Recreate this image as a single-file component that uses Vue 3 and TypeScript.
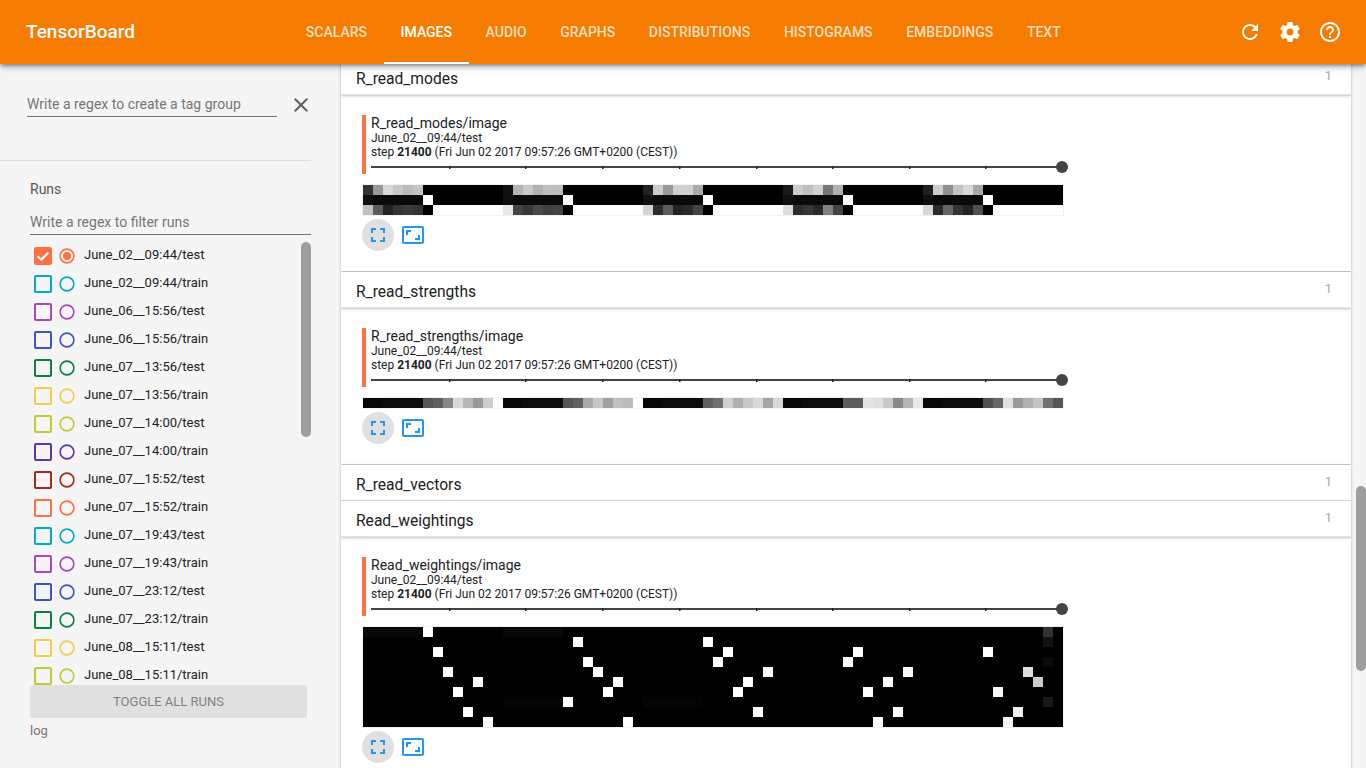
<script setup lang="ts">
interface Cell { c: number; r: number; v: string }
interface Section {
  name: string
  tag?: string
  rows?: number
  cells?: Cell[]
}

const tabs = ['Scalars', 'Images', 'Audio', 'Graphs', 'Distributions', 'Histograms', 'Embeddings', 'Text']

const palette = ['#ff7043', '#00acc1', '#ab47bc', '#3c55c4', '#0b8043', '#f7cb4d', '#c0ca33', '#5e35b1', '#a52714']
const runNames = [
  'June_02__09:44/test', 'June_02__09:44/train', 'June_06__15:56/test', 'June_06__15:56/train',
  'June_07__13:56/test', 'June_07__13:56/train', 'June_07__14:00/test', 'June_07__14:00/train',
  'June_07__15:52/test', 'June_07__15:52/train', 'June_07__19:43/test', 'June_07__19:43/train',
  'June_07__23:12/test', 'June_07__23:12/train', 'June_08__15:11/test', 'June_08__15:11/train',
]
const runs = runNames.map((name, i) => ({ name, color: palette[i % palette.length], on: i === 0 }))

const ticks = [78, 154, 231, 308, 385, 461, 538, 614]

// gray helper, everything not listed stays black
const g = (n: number) => `rgb(${n},${n},${n})`

function modesCells(): Cell[] {
  const top = [
    [0x33, 0x99, 0xd8, 0xc8, 0xbb, 0xc4],
    [0x11, 0xb4, 0xc8, 0xb0, 0xbe, 0xbc],
    [0x22, 0xcc, 0x99, 0xd0, 0xd0, 0xaa],
    [0x1a, 0xcc, 0xbf, 0xd0, 0x77, 0xb0],
    [0x1f, 0xcc, 0x90, 0xc4, 0xd8, 0xa8],
  ]
  const bottom = [
    [0xc0, 0x5c, 0x22, 0x33, 0x3a, 0x33],
    [0xe8, 0x44, 0x38, 0x4a, 0x40, 0x44],
    [0xd4, 0x2c, 0x5c, 0x22, 0x2a, 0x44],
    [0xdc, 0x2c, 0x36, 0x28, 0x80, 0x44],
    [0xd8, 0x2a, 0x66, 0x33, 0x22, 0x50],
  ]
  const out: Cell[] = []
  for (let k = 0; k < 5; k++) {
    const base = k * 14
    for (let i = 0; i < 6; i++) {
      out.push({ c: base + i, r: 0, v: g(top[k][i]) })
      out.push({ c: base + i, r: 1, v: g(i === 0 ? 0x10 : 0x0a) })
      out.push({ c: base + i, r: 2, v: g(bottom[k][i]) })
    }
    out.push({ c: base + 6, r: 1, v: '#fff' })
    for (let i = 7; i < 14; i++) out.push({ c: base + i, r: 2, v: '#fff' })
  }
  return out
}

function strengthsCells(): Cell[] {
  const tails = [
    [0x55, 0x60, 0x88, 0xd8, 0xb8, 0x99, 0xcc, 0xff],
    [0x55, 0x60, 0xaa, 0xc8, 0xa0, 0xc0, 0xbb, 0xff],
    [0x60, 0x70, 0xd0, 0xb0, 0xc8, 0xd8, 0xa4, 0xd8],
    [0x5c, 0x5c, 0xe4, 0xe0, 0xc8, 0x88, 0xb4, 0xe8],
    [0x50, 0x66, 0xe0, 0x99, 0xb0, 0xc4, 0x70, 0x55],
  ]
  const out: Cell[] = []
  tails.forEach((t, k) => {
    const base = k * 14
    for (let i = 0; i < 6; i++) out.push({ c: base + i, r: 0, v: g(i < 2 ? 0x08 : 0x0c) })
    t.forEach((n, i) => out.push({ c: base + 6 + i, r: 0, v: g(n) }))
  })
  return out
}

function weightCells(): Cell[] {
  const white: [number, number, number?][] = [
    [6, 0], [21, 1], [34, 1], [7, 2], [36, 2], [49, 2], [62, 2], [22, 3], [35, 3], [48, 3],
    [8, 4], [23, 4], [40, 4], [54, 4, 0xf8], [66, 4, 0xe0], [11, 5], [25, 5], [38, 5], [52, 5], [67, 5, 0xcc],
    [9, 6], [24, 6], [37, 6], [50, 6], [63, 6, 0xf8], [20, 7], [10, 8], [39, 8], [53, 8], [65, 8, 0xee],
    [12, 9], [26, 9], [51, 9], [64, 9, 0xf4],
  ]
  const out: Cell[] = white.map(([c, r, n]) => ({ c, r, v: g(n ?? 255) }))
  for (let i = 0; i < 6; i++) {
    out.push({ c: i, r: 0, v: g(0x08) })
    out.push({ c: 14 + i, r: 0, v: g(0x08) })
    out.push({ c: 14 + i, r: 7, v: g(0x04) })
    out.push({ c: 28 + i, r: 7, v: g(0x04) })
  }
  out.push({ c: 68, r: 0, v: g(0x33) }, { c: 68, r: 1, v: g(0x11) }, { c: 68, r: 3, v: g(0x0a) }, { c: 68, r: 7, v: g(0x18) })
  return out
}

const sections: Section[] = [
  { name: 'R_read_modes', tag: 'R_read_modes/image', rows: 3, cells: modesCells() },
  { name: 'R_read_strengths', tag: 'R_read_strengths/image', rows: 1, cells: strengthsCells() },
  { name: 'R_read_vectors' },
  { name: 'Read_weightings', tag: 'Read_weightings/image', rows: 10, cells: weightCells() },
]
</script>

<template>
  <div class="page">
    <header class="toolbar">
      <div class="title">TensorBoard</div>
      <nav class="tabs">
        <div v-for="t in tabs" :key="t" class="tab" :class="{ active: t === 'Images' }">{{ t }}</div>
      </nav>
      <div class="actions">
        <button class="icon-btn">
          <svg viewBox="0 0 24 24"><path d="M17.65 6.35C16.2 4.9 14.21 4 12 4c-4.42 0-7.99 3.58-7.99 8s3.57 8 7.99 8c3.73 0 6.84-2.55 7.73-6h-2.08c-.82 2.33-3.04 4-5.65 4-3.31 0-6-2.69-6-6s2.69-6 6-6c1.66 0 3.14.69 4.22 1.78L13 11h7V4l-2.35 2.35z" /></svg>
        </button>
        <button class="icon-btn">
          <svg viewBox="0 0 24 24"><path d="M19.43 12.98c.04-.32.07-.64.07-.98s-.03-.66-.07-.98l2.11-1.65c.19-.15.24-.42.12-.64l-2-3.46c-.12-.22-.39-.3-.61-.22l-2.49 1c-.52-.4-1.08-.73-1.69-.98l-.38-2.65C14.46 2.18 14.25 2 14 2h-4c-.25 0-.46.18-.49.42l-.38 2.65c-.61.25-1.17.59-1.69.98l-2.49-1c-.23-.09-.49 0-.61.22l-2 3.46c-.13.22-.07.49.12.64l2.11 1.65c-.04.32-.07.65-.07.98s.03.66.07.98l-2.11 1.65c-.19.15-.24.42-.12.64l2 3.46c.12.22.39.3.61.22l2.49-1c.52.4 1.08.73 1.69.98l.38 2.65c.03.24.24.42.49.42h4c.25 0 .46-.18.49-.42l.38-2.65c.61-.25 1.17-.59 1.69-.98l2.49 1c.23.09.49 0 .61-.22l2-3.46c.12-.22.07-.49-.12-.64l-2.11-1.65zM12 15.5c-1.93 0-3.5-1.57-3.5-3.5s1.57-3.5 3.5-3.5 3.5 1.57 3.5 3.5-1.57 3.5-3.5 3.5z" /></svg>
        </button>
        <button class="icon-btn">
          <svg viewBox="0 0 24 24"><path d="M11 18h2v-2h-2v2zm1-16C6.48 2 2 6.48 2 12s4.48 10 10 10 10-4.48 10-10S17.52 2 12 2zm0 18c-4.41 0-8-3.59-8-8s3.59-8 8-8 8 3.59 8 8-3.59 8-8 8zm0-14c-2.21 0-4 1.79-4 4h2c0-1.1.9-2 2-2s2 .9 2 2c0 2-3 1.75-3 5h2c0-2.25 3-2.5 3-5 0-2.21-1.79-4-4-4z" /></svg>
        </button>
      </div>
    </header>

    <div class="body">
      <aside class="sidebar">
        <div class="group-filter">
          <div class="field group-field">Write a regex to create a tag group</div>
          <svg class="close" viewBox="0 0 24 24"><path d="M19 6.41L17.59 5 12 10.59 6.41 5 5 6.41 10.59 12 5 17.59 6.41 19 12 13.41 17.59 19 19 17.59 13.41 12z" /></svg>
        </div>
        <div class="runs">
          <div class="runs-title">Runs</div>
          <div class="field run-field">Write a regex to filter runs</div>
          <div class="run-list">
            <div v-for="r in runs" :key="r.name" class="run">
              <span class="check" :style="{ borderColor: r.color, background: r.on ? r.color : 'transparent' }">
                <svg v-if="r.on" viewBox="0 0 18 18"><path d="M3.6 9.2l3.7 3.6 7-7.4" /></svg>
              </span>
              <svg class="radio" viewBox="0 0 16 16">
                <circle cx="8" cy="8" r="6.9" fill="none" :stroke="r.color" stroke-width="1.6" />
                <circle v-if="r.on" cx="8" cy="8" r="4" :fill="r.color" />
              </svg>
              <span class="run-name">{{ r.name }}</span>
            </div>
            <div class="list-thumb"></div>
          </div>
          <div class="toggle">TOGGLE ALL RUNS</div>
          <div class="log">log</div>
        </div>
      </aside>

      <main class="main">
        <section v-for="s in sections" :key="s.name" class="category">
          <div class="cat-head">
            <span class="cat-name">{{ s.name }}</span>
            <span class="cat-count">1</span>
          </div>
          <div v-if="s.tag" class="cat-body">
            <div class="card-head">
              <div class="meta">
                <div class="tag">{{ s.tag }}</div>
                <div class="line">June_02__09:44/test</div>
                <div class="line">step <b>21400</b> (Fri Jun 02 2017 09:57:26 GMT+0200 (CEST))</div>
                <svg class="slider" width="698" height="14" viewBox="0 0 698 14">
                  <rect x="0" y="6" width="691" height="2" fill="#444" />
                  <rect v-for="t in ticks" :key="t" :x="t" y="6" width="1.5" height="3" fill="#222" />
                  <circle cx="691" cy="7" r="6" fill="#444" />
                </svg>
              </div>
            </div>
            <svg class="strip" width="700" :height="(s.rows ?? 1) * 10" shape-rendering="crispEdges">
              <rect width="700" :height="(s.rows ?? 1) * 10" fill="#000" />
              <rect
                v-for="(cell, i) in s.cells"
                :key="i"
                :x="cell.c * 10"
                :y="cell.r * 10"
                width="10"
                height="10"
                :fill="cell.v"
              />
            </svg>
            <div class="img-actions">
              <span class="round-btn">
                <svg viewBox="0 0 24 24"><path d="M7 14H5v5h5v-2H7v-3zm-2-4h2V7h3V5H5v5zm12 7h-3v2h5v-5h-2v3zM14 5v2h3v3h2V5h-5z" /></svg>
              </span>
              <span class="plain-btn">
                <svg viewBox="0 0 24 24"><path d="M19 12h-2v3h-3v2h5v-5zM7 9h3V7H5v5h2V9zm14-6H3c-1.1 0-2 .9-2 2v14c0 1.1.9 2 2 2h18c1.1 0 2-.9 2-2V5c0-1.1-.9-2-2-2zm0 16.01H3V4.99h18v14.02z" /></svg>
              </span>
            </div>
          </div>
        </section>
      </main>

      <div class="page-scroll"><div class="page-thumb"></div></div>
    </div>
  </div>
</template>

<style>
html, body { margin: 0; height: 100%; overflow: hidden; background: #f5f5f5; }
</style>

<style scoped>
.page {
  width: 1366px;
  height: 768px;
  display: flex;
  flex-direction: column;
  overflow: hidden;
  font-family: Roboto, "Liberation Sans", sans-serif;
  background: #f5f5f5;
}
.toolbar {
  position: relative;
  z-index: 5;
  flex: 0 0 64px;
  display: flex;
  align-items: center;
  padding: 0 16px 0 26px;
  background: #f57c00;
  color: #fff;
  box-shadow: 0 4px 5px 0 rgba(0, 0, 0, .14), 0 1px 10px 0 rgba(0, 0, 0, .12), 0 2px 4px -1px rgba(0, 0, 0, .4);
}
.title { width: 263px; font-size: 19px; font-weight: 500; transform: translateY(-1px); }
.tabs { display: flex; height: 64px; flex: 1; }
.tab {
  display: flex;
  align-items: center;
  padding: 0 16.8px;
  font-size: 14px;
  font-weight: 500;
  text-transform: uppercase;
  color: rgba(255, 255, 255, .75);
  box-sizing: border-box;
  border-bottom: 2px solid transparent;
  border-top: 2px solid transparent;
}
.tab.active { color: #fff; border-bottom-color: #fff; }
.actions { display: flex; }
.icon-btn {
  width: 40px;
  height: 40px;
  padding: 8px;
  border: 0;
  background: none;
  fill: #fff;
}
.icon-btn svg { display: block; width: 24px; height: 24px; }

.body { flex: 1; display: flex; min-height: 0; }
.sidebar { flex: 0 0 341px; display: flex; flex-direction: column; }
.group-filter {
  height: 97px;
  box-sizing: border-box;
  width: 311px;
  padding: 28px 0 0 27px;
  border-bottom: 1px solid #ddd;
  display: flex;
  align-items: flex-start;
}
.field {
  box-sizing: border-box;
  font-size: 14px;
  color: #757575;
  line-height: 24px;
  border-bottom: 1px solid #757575;
}
.group-field { flex: 0 0 250px; }
.close { flex: 0 0 24px; height: 24px; margin: 1px 0 0 12px; fill: #616161; }

.runs { flex: 1; display: flex; flex-direction: column; min-height: 0; padding-left: 30px; width: 281px; }
.runs-title { margin-top: 20px; font-size: 14px; line-height: 16px; color: #555; }
.run-field { margin-top: 13px; height: 25px; line-height: 24px; }
.run-list { position: relative; height: 450px; overflow: hidden; margin-top: 0; padding-top: 7px; box-sizing: border-box; }
.run { display: flex; align-items: center; height: 28px; }
.check {
  box-sizing: border-box;
  width: 18px;
  height: 18px;
  margin-left: 4px;
  border: 2px solid;
  border-radius: 2px;
  position: relative;
}
.check svg {
  position: absolute;
  left: -2px;
  top: -2px;
  width: 18px;
  height: 18px;
  fill: none;
  stroke: #fff;
  stroke-width: 2.2;
}
.radio { flex: none; width: 16px; height: 16px; margin-left: 7px; }
.run-name { margin-left: 9px; font-size: 13px; color: #212121; transform: translateY(-2px); }
.list-thumb {
  position: absolute;
  right: 0;
  top: 7px;
  width: 10px;
  height: 195px;
  border-radius: 5px;
  background: #9e9e9e;
}
.toggle {
  width: 277px;
  height: 33px;
  line-height: 33px;
  text-align: center;
  font-size: 13px;
  border-radius: 3px;
  background: #e0e0e0;
  color: #808080;
}
.log { margin-top: 4px; font-size: 13px; line-height: 18px; color: #757575; }

.main { width: 1010px; flex: none; margin-top: -5px; }
.cat-head {
  position: relative;
  height: 36px;
  box-sizing: border-box;
  padding-left: 15px;
  display: flex;
  align-items: center;
  background: #fff;
  border-bottom: 1px solid #e4e4e4;
  box-shadow: 0 1px 3px 0 rgba(0, 0, 0, .22), 0 0 2px 0 rgba(0, 0, 0, .08);
}
.cat-name { font-size: 15.6px; color: #212121; transform: translateY(2px); }
.cat-count {
  position: absolute;
  right: 19px;
  top: 9px;
  font-size: 13px;
  line-height: 16px;
  color: #aaa;
}
.cat-body {
  margin-bottom: 1px;
  padding: 20px 0 20px 21px;
  background: #fff;
  box-shadow: 0 1px 3px 0 rgba(0, 0, 0, .22), 0 0 2px 0 rgba(0, 0, 0, .08);
}
.card-head { margin-bottom: 11px; }
.meta { box-sizing: border-box; height: 59px; border-left: 4px solid #ff7043; padding-left: 5px; color: #212121; }
.tag { font-size: 14px; line-height: 16px; }
.line { font-size: 12px; line-height: 14px; }
.slider { display: block; margin-top: 1px; overflow: visible; }
.strip { display: block; margin-left: 1px; box-shadow: 0 0 0 1px #f2f2f2; }
.img-actions { display: flex; margin-top: 4px; gap: 3px; }
.round-btn, .plain-btn {
  width: 32px;
  height: 32px;
  padding: 4px;
  box-sizing: border-box;
  fill: #2196f3;
}
.round-btn { border-radius: 50%; background: #e0e0e0; }
.round-btn svg, .plain-btn svg { display: block; width: 24px; height: 24px; }

.page-scroll { flex: 1; position: relative; }
.page-thumb {
  position: absolute;
  right: 0;
  top: 422px;
  width: 10px;
  height: 185px;
  border-radius: 5px;
  background: #9e9e9e;
}
</style>
